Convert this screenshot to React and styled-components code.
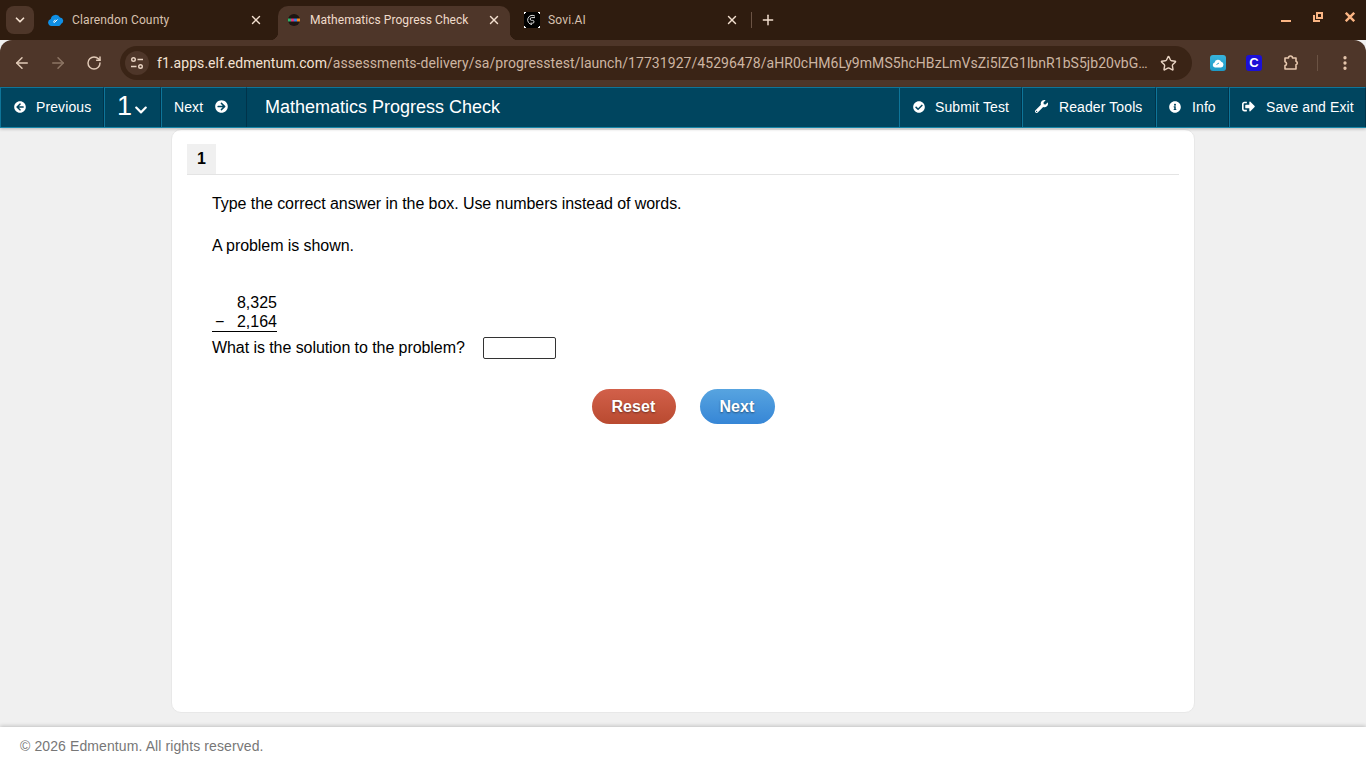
import React from 'react';
import styled, { createGlobalStyle } from 'styled-components';
import { ArrowLeft, ArrowRight, RotateCw, Star, EllipsisVertical, X, Plus, ChevronDown } from 'lucide-react';
import { FaArrowCircleLeft, FaArrowCircleRight, FaCheckCircle, FaWrench, FaInfoCircle, FaSignOutAlt, FaChevronDown } from 'react-icons/fa';

const GlobalStyle = createGlobalStyle`
  html, body { margin: 0; padding: 0; height: 100%; overflow: hidden; }
  body { font-family: "Liberation Sans", Arial, sans-serif; background: #f0f0f0; }
  * { box-sizing: border-box; }
`;

const Page = styled.div`
  width: 1366px;
  height: 768px;
  display: flex;
  flex-direction: column;
`;

const TabStrip = styled.div`
  height: 40px;
  flex: none;
  background: #2f1c0f;
  display: flex;
  align-items: flex-end;
  padding-left: 6px;
  font-family: Roboto, sans-serif;
`;

const TabSearch = styled.div`
  width: 28px;
  height: 28px;
  margin: 0 6px 6px 0;
  border-radius: 8px;
  background: #4e3629;
  color: #f3dfcf;
  display: flex;
  align-items: center;
  justify-content: center;
`;

const Tab = styled.div`
  position: relative;
  width: ${p => p.$width}px;
  height: 34px;
  flex: none;
  display: flex;
  align-items: center;
  padding: 0 ${p => p.$right}px 6px ${p => p.$left}px;
  border-radius: 10px 10px 0 0;
  background: ${p => (p.$active ? '#4e3629' : 'transparent')};
  color: ${p => (p.$active ? '#f0dccb' : '#d9c2af')};
  font-size: 12px;
  letter-spacing: ${p => (p.$active ? 0.05 : 0.15)}px;

  ${p => p.$active && `
    &:before, &:after {
      content: "";
      position: absolute;
      bottom: 0;
      width: 8px;
      height: 8px;
    }
    &:before { left: -8px; background: radial-gradient(circle at 0 0, transparent 8px, #4e3629 8.5px); }
    &:after { right: -8px; background: radial-gradient(circle at 100% 0, transparent 8px, #4e3629 8.5px); }
  `}
`;

const TabTitle = styled.span`
  flex: 1;
  margin-left: 8px;
  white-space: nowrap;
`;

const TabClose = styled(X)`
  color: #f3dfcf;
  flex: none;
`;

const TabDivider = styled.div`
  width: 1px;
  height: 16px;
  margin: 0 0 12px 3px;
  background: #6b5344;
`;

const NewTab = styled(Plus)`
  color: #f3dfcf;
  margin: 0 0 12px 8px;
`;

const WindowControls = styled.div`
  margin: 0 11px 18px auto;
  display: flex;
  gap: 22px;
  color: #fbb584;
`;

const Toolbar = styled.div`
  height: 47px;
  flex: none;
  background: #4e3629;
  border-radius: 12px 12px 0 0;
  display: flex;
  align-items: center;
  padding: 0 12px 1px 13px;
  color: #e2cbb8;
  font-family: Roboto, sans-serif;
`;

const ToolButton = styled.div`
  width: 18px;
  height: 18px;
  margin-right: ${p => p.$gap}px;
  display: flex;
  align-items: center;
  justify-content: center;
  color: ${p => (p.$dim ? '#8d7564' : '#e2cbb8')};
`;

const AddressBar = styled.div`
  width: 1072px;
  height: 34px;
  flex: none;
  margin: 0 18px 0 17px;
  padding: 0 15px 0 5px;
  border-radius: 17px;
  background: #3a2416;
  display: flex;
  align-items: center;
`;

const SiteChip = styled.div`
  width: 24px;
  height: 24px;
  flex: none;
  border-radius: 50%;
  background: #4e3629;
  display: flex;
  align-items: center;
  justify-content: center;
`;

const Url = styled.div`
  flex: 1;
  min-width: 0;
  margin-left: 8px;
  font-size: 14px;
  color: #cdb5a2;
  white-space: nowrap;
  letter-spacing: 0.055px;
`;

const Host = styled.span`
  color: #f3e2d4;
`;

const ExtIcon = styled.div`
  width: 16px;
  height: 16px;
  margin-right: 20px;
  flex: none;
  border-radius: 3px;
  background: ${p => p.$bg};
  color: #fff;
  font: bold 13px/16px "Liberation Sans", sans-serif;
  display: flex;
  align-items: center;
  justify-content: center;
`;

const ToolDivider = styled.div`
  width: 1px;
  height: 16px;
  margin: 0 18px 0 17px;
  background: #6b5344;
`;

const NavBar = styled.div`
  height: 41px;
  flex: none;
  background: #00455f;
  border-bottom: 1px solid #1786a8;
  display: flex;
  align-items: stretch;
  color: #fff;
  font-size: 14px;
  letter-spacing: 0.1px;
  box-shadow: 0 1px 3px rgba(0, 0, 0, 0.25);
  position: relative;
  z-index: 1;
`;

const NavItem = styled.div`
  width: ${p => p.$width}px;
  flex: none;
  display: flex;
  align-items: center;
  gap: ${p => p.$gap || 10}px;
  padding: 0 0 2px ${p => p.$left}px;
  border-top: 1px solid #0e7599;
  border-left: 1px solid #0e7599;
  border-right: 1px solid #00334a;
  white-space: nowrap;
`;

const QuestionNumber = styled.span`
  font-size: 27px;
  line-height: 1;
`;

const NavTitle = styled.div`
  flex: 1;
  display: flex;
  align-items: center;
  padding-left: 18px;
  font-size: 18px;
  letter-spacing: 0;
  border-top: 1px solid #0e7599;
`;

const Main = styled.main`
  flex: 1;
  min-height: 0;
  padding: 1px 0 14px;
  display: flex;
  justify-content: center;
  background: #f0f0f0;
`;

const Card = styled.section`
  width: 1024px;
  padding: 14px 15px;
  background: #fff;
  border: 1px solid #e8e8e8;
  border-radius: 10px;
`;

const ItemTabs = styled.div`
  height: 31px;
  border-bottom: 1px solid #e4e4e4;
`;

const ItemTab = styled.div`
  width: 29px;
  height: 30px;
  background: #f0f0f0;
  color: #000;
  font-size: 16px;
  font-weight: bold;
  display: flex;
  align-items: center;
  justify-content: center;
`;

const Question = styled.div`
  padding: 20px 0 0 25px;
  color: #000;
  font-size: 16px;
  line-height: 18px;
  letter-spacing: -0.07px;
`;

const Prompt = styled.p`
  margin: 0 0 24px;
`;

const Sum = styled.div`
  width: 65px;
  margin-top: 38px;
  border-bottom: 1px solid #000;
  letter-spacing: 0;
`;

const SumRow = styled.div`
  height: 19px;
  display: flex;
  justify-content: space-between;
  align-items: center;
`;

const SumSign = styled.span`
  padding-left: 3px;
`;

const Answer = styled.div`
  display: flex;
  align-items: center;
  height: 22px;
  margin-top: 5px;
`;

const AnswerBox = styled.input`
  width: 73px;
  height: 22px;
  margin-left: 18px;
  padding: 0 4px;
  background: #fff;
  border: 1px solid #333;
  border-radius: 2px;
  outline: none;
`;

const Actions = styled.div`
  display: flex;
  justify-content: center;
  gap: 24px;
  margin-top: 30px;
`;

const PillButton = styled.button`
  width: ${p => p.$width}px;
  height: 35px;
  padding: 0;
  border: 0;
  border-radius: 18px;
  background: ${p => p.$bg};
  color: #fff;
  font: bold 16px "Liberation Sans", Arial, sans-serif;
  letter-spacing: 0.1px;
  text-shadow: 0 1px 2px rgba(0, 0, 0, 0.45);
`;

const Footer = styled.footer`
  height: 41px;
  flex: none;
  padding: 0 0 3px 20px;
  display: flex;
  align-items: center;
  background: #fff;
  color: #777;
  font-size: 14px;
  letter-spacing: 0.1px;
  box-shadow: 0 -1px 4px rgba(0, 0, 0, 0.2);
  position: relative;
`;

const CloudFavicon = () => (
  <svg width="16" height="16" viewBox="0 0 16 16">
    <path d="M3.4 14A3.5 3.5 0 0 1 2.8 7.1 4.9 4.9 0 0 1 12 5.5a3.3 3.3 0 0 1 1 6.4c-.5 1.3-1.4 2.1-2.8 2.1z" fill="#0f8fe6" />
    <path d="M6.5 10.5l3-3M7.5 8.2a1.5 1.5 0 0 0-1.2 2.6" stroke="#fff" strokeWidth="1" fill="none" />
  </svg>
);

const ProgressFavicon = () => (
  <svg width="16" height="16" viewBox="0 0 16 16">
    <circle cx="8" cy="8" r="6" fill="#1c1512" />
    <rect x="2" y="6.5" width="3" height="3" fill="#2fb36a" />
    <rect x="5" y="6.5" width="3" height="3" fill="#d8397f" />
    <rect x="8" y="6.5" width="3" height="3" fill="#3b7fe0" />
    <rect x="11" y="6.5" width="3" height="3" fill="#f08a24" />
  </svg>
);

const SoviFavicon = () => (
  <svg width="16" height="16" viewBox="0 0 16 16">
    <rect width="16" height="16" fill="#000" />
    <path d="M0 0h2v1H1v1H0zM14 0h2v2h-1V1h-1zM0 14h1v1h1v1H0zM16 14v2h-2v-1h1v-1z" fill="#fff" />
    <path d="M11 4.2A4.6 4.6 0 1 0 8 12.5M11 5.6H7.6a1.3 1.3 0 0 0 0 2.8h1a1.3 1.3 0 0 1 0 2.8H6.5" stroke="#ddd" strokeWidth="1" fill="none" />
  </svg>
);

const SiteSettingsIcon = () => (
  <svg width="14" height="14" viewBox="0 0 14 14" fill="none" stroke="#e8d3c2" strokeWidth="1.4">
    <circle cx="3.5" cy="3.5" r="1.8" />
    <path d="M7.5 3.5h5.5M1 10.5h5.5" />
    <circle cx="10.5" cy="10.5" r="1.8" />
  </svg>
);

const PuzzleIcon = () => (
  <svg width="18" height="18" viewBox="0 0 18 18" fill="none" stroke="#e8c8ae" strokeWidth="1.6" strokeLinejoin="round">
    <path d="M3 4h3.5a2 2 0 0 1 4 0H14v3.2a1.9 1.9 0 0 1 0 3.6V15H3v-3.4a2 2 0 0 0 0-3.9z" />
  </svg>
);

const CloudExtIcon = () => (
  <svg width="12" height="10" viewBox="0 0 12 10">
    <path d="M3 9.5A2.5 2.5 0 0 1 2.6 4.6 3.5 3.5 0 0 1 9.2 3.8 2.9 2.9 0 0 1 9 9.5z" fill="#fff" />
    <path d="M4.5 6.5l2.5-1.5" stroke="#27a6cf" strokeWidth="1" />
  </svg>
);

const MinimizeIcon = () => (
  <svg width="10" height="10" viewBox="0 0 10 10">
    <rect y="8" width="10" height="2" fill="currentColor" />
  </svg>
);

const RestoreIcon = () => (
  <svg width="10" height="10" viewBox="0 0 10 10" fill="none" stroke="currentColor" strokeWidth="2">
    <path d="M4 1h5v5H4zM1 3v6h6" />
  </svg>
);

const CloseIcon = () => (
  <svg width="10" height="10" viewBox="0 0 10 10" fill="none" stroke="currentColor" strokeWidth="2.4">
    <path d="M.8.8l8.4 8.4M9.2.8L.8 9.2" />
  </svg>
);

const URL_PATH = '/assessments-delivery/sa/progresstest/launch/17731927/45296478/aHR0cHM6Ly9mMS5hcHBzLmVsZi5lZG1lbnR1bS5jb20vbG…';

export default function App() {
  return (
    <Page>
      <GlobalStyle />
      <TabStrip>
        <TabSearch><ChevronDown size={14} strokeWidth={3} /></TabSearch>
        <Tab $width={238} $left={8} $right={15}>
          <CloudFavicon />
          <TabTitle>Clarendon County</TabTitle>
          <TabClose size={14} strokeWidth={2.4} />
        </Tab>
        <Tab $width={232} $left={8} $right={9} $active>
          <ProgressFavicon />
          <TabTitle>Mathematics Progress Check</TabTitle>
          <TabClose size={14} strokeWidth={2.4} />
        </Tab>
        <Tab $width={238} $left={14} $right={9}>
          <SoviFavicon />
          <TabTitle>Sovi.AI</TabTitle>
          <TabClose size={14} strokeWidth={2.4} />
        </Tab>
        <TabDivider />
        <NewTab size={16} strokeWidth={2.2} />
        <WindowControls>
          <MinimizeIcon />
          <RestoreIcon />
          <CloseIcon />
        </WindowControls>
      </TabStrip>

      <Toolbar>
        <ToolButton $gap={18}><ArrowLeft size={18} /></ToolButton>
        <ToolButton $gap={18} $dim><ArrowRight size={18} /></ToolButton>
        <ToolButton $gap={0}><RotateCw size={16} strokeWidth={2.2} /></ToolButton>
        <AddressBar>
          <SiteChip><SiteSettingsIcon /></SiteChip>
          <Url><Host>f1.apps.elf.edmentum.com</Host>{URL_PATH}</Url>
          <Star size={17} color="#e8d3c2" strokeWidth={2} />
        </AddressBar>
        <ExtIcon $bg="linear-gradient(#38b4dc, #1e9ac6)"><CloudExtIcon /></ExtIcon>
        <ExtIcon $bg="#1b10d6">C</ExtIcon>
        <PuzzleIcon />
        <ToolDivider />
        <EllipsisVertical size={18} color="#e8c8ae" strokeWidth={2.4} />
      </Toolbar>

      <NavBar>
        <NavItem $width={104} $left={13}>
          <FaArrowCircleLeft size={12} /> Previous
        </NavItem>
        <NavItem $width={57} $left={12} $gap={2}>
          <QuestionNumber>1</QuestionNumber>
          <FaChevronDown size={14} style={{ marginTop: 6 }} />
        </NavItem>
        <NavItem $width={86} $left={12} $gap={12}>
          Next <FaArrowCircleRight size={13} />
        </NavItem>
        <NavTitle>Mathematics Progress Check</NavTitle>
        <NavItem $width={123} $left={13} $gap={10}>
          <FaCheckCircle size={12} /> Submit Test
        </NavItem>
        <NavItem $width={134} $left={12} $gap={11}>
          <FaWrench size={13} /> Reader Tools
        </NavItem>
        <NavItem $width={73} $left={12} $gap={11}>
          <FaInfoCircle size={12} /> Info
        </NavItem>
        <NavItem $width={137} $left={12} $gap={11}>
          <FaSignOutAlt size={13} /> Save and Exit
        </NavItem>
      </NavBar>

      <Main>
        <Card>
          <ItemTabs><ItemTab>1</ItemTab></ItemTabs>
          <Question>
            <Prompt>Type the correct answer in the box. Use numbers instead of words.</Prompt>
            <Prompt>A problem is shown.</Prompt>
            <Sum>
              <SumRow><span /><span>8,325</span></SumRow>
              <SumRow><SumSign>&minus;</SumSign><span>2,164</span></SumRow>
            </Sum>
            <Answer>
              What is the solution to the problem?
              <AnswerBox type="text" aria-label="answer" />
            </Answer>
          </Question>
          <Actions>
            <PillButton $width={84} $bg="linear-gradient(#d2604a, #b94a30)">Reset</PillButton>
            <PillButton $width={75} $bg="linear-gradient(#57a4e0, #3686d6)">Next</PillButton>
          </Actions>
        </Card>
      </Main>

      <Footer>© 2026 Edmentum. All rights reserved.</Footer>
    </Page>
  );
}
